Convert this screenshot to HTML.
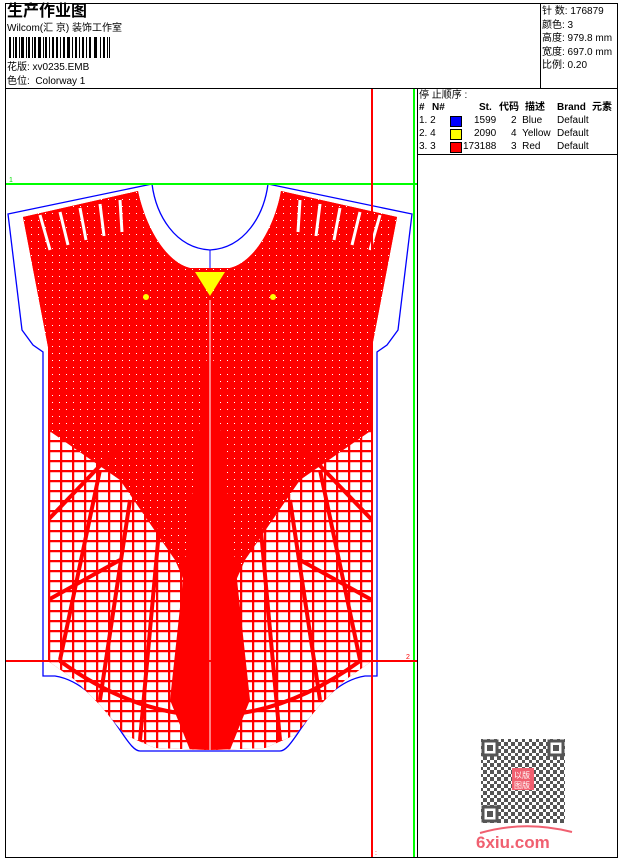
<!DOCTYPE html>
<html><head><meta charset="utf-8"><style>
html,body{margin:0;padding:0;background:#fff;}
body{width:620px;height:860px;position:relative;overflow:hidden;font-family:"Liberation Sans","Noto Sans CJK SC",sans-serif;color:#000;}
.a{position:absolute;white-space:nowrap;}
.t{font-size:10px;line-height:12px;}
</style></head><body>
<svg class="a" style="left:0;top:0" width="620" height="860" viewBox="0 0 620 860">
<defs>
<clipPath id="shirt"><path d="M23,217 L138,191 C145,225 165,262 190,268 L230,268 C255,262 275,225 281,191 L397,217 L372,347 L372,661 L345,680 L320,705 L295,735 L265,748 L210,750 L155,748 L125,735 L100,705 L75,680 L48,661 L48,347 Z"/></clipPath>
<pattern id="grid" width="12" height="10" patternUnits="userSpaceOnUse"><rect width="12" height="10" fill="#fff"/><path d="M0,1H12M1,0V10" stroke="#f00" stroke-width="2.5"/></pattern>
<pattern id="dots" width="7" height="7" patternUnits="userSpaceOnUse"><rect width="7" height="7" fill="#f00"/><rect x="3" y="3" width="1" height="1" fill="#fff"/></pattern>
<pattern id="qr" width="7" height="7" patternUnits="userSpaceOnUse"><rect width="7" height="7" fill="#fff"/><rect width="4" height="4" fill="#555"/><rect x="4" y="4" width="3" height="3" fill="#555"/></pattern>
</defs>
<text x="9" y="182" font-size="7" fill="#0d0" font-family="Liberation Sans">1</text>
<path d="M8,214 L152,184 C156,215 175,248 210,250 C245,248 264,215 268,184 L412,214 L398,330 L387,345 L377,352 L377,676 L365,676 C340,680 320,700 300,730 C290,745 285,751 280,751 L140,751 C135,751 130,745 120,730 C100,700 80,680 55,676 L43,676 L43,352 L33,345 L22,330 Z" fill="none" stroke="#00f" stroke-width="1.3"/>
<line x1="210" y1="250" x2="210" y2="270" stroke="#00f"/>
<g clip-path="url(#shirt)">
<rect x="0" y="180" width="420" height="580" fill="url(#dots)"/>
<rect x="0" y="430" width="420" height="330" fill="url(#grid)"/>
<path d="M0,180 L0,440 L48,430 L120,480 L175,560 L210,640 L245,560 L300,480 L372,430 L420,440 L420,180 Z" fill="url(#dots)"/>
<path d="M210,330 L170,700 L190,750 L230,750 L250,700 Z" fill="#f00"/>
<path d="M100,470 L60,660 M130,500 L100,700 M160,520 L140,740 M320,470 L360,660 M290,500 L320,700 M260,520 L280,740 M115,450 L48,520 M305,450 L372,520 M48,600 L120,560 M372,600 L300,560 M60,661 Q210,770 360,661" stroke="#f00" stroke-width="4" fill="none"/>
<path d="M40,215 L50,250 M60,212 L68,245 M80,208 L86,240 M100,204 L104,236 M120,200 L122,232 M300,200 L298,232 M320,204 L316,236 M340,208 L334,240 M360,212 L352,245 M380,215 L370,250" stroke="#fff" stroke-width="3"/>
<path d="M195,272 L225,272 L210,296 Z" fill="#ff0"/>
<circle cx="146" cy="297" r="3" fill="#ff0"/><circle cx="273" cy="297" r="3" fill="#ff0"/>
<line x1="210" y1="300" x2="210" y2="750" stroke="#fff" stroke-width="1"/>
</g>
<g shape-rendering="crispEdges">
<rect x="5" y="3" width="613" height="1" fill="#000"/>
<rect x="5" y="857" width="613" height="1" fill="#000"/>
<rect x="5" y="3" width="1" height="855" fill="#000"/>
<rect x="617" y="3" width="1" height="855" fill="#000"/>
<rect x="5" y="88" width="613" height="1" fill="#000"/>
<rect x="540" y="3" width="1" height="86" fill="#000"/>
<rect x="417" y="88" width="1" height="770" fill="#000"/>
<rect x="417" y="154" width="201" height="1" fill="#000"/>
<rect x="6" y="183" width="411" height="2" fill="#0f0"/>
<rect x="413" y="89" width="2" height="768" fill="#0f0"/>
<rect x="371" y="89" width="2" height="768" fill="#f00"/>
<rect x="6" y="660" width="411" height="2" fill="#f00"/>
</g>
<text x="406" y="659" font-size="7" fill="#f00" font-family="Liberation Sans">2</text>
<g fill="#000">
<rect x="9" y="37" width="2" height="21"/><rect x="13" y="37" width="1" height="21"/><rect x="15" y="37" width="2" height="21"/><rect x="19" y="37" width="1" height="21"/><rect x="21" y="37" width="3" height="21"/><rect x="26" y="37" width="1" height="21"/><rect x="28" y="37" width="2" height="21"/><rect x="32" y="37" width="1" height="21"/><rect x="34" y="37" width="2" height="21"/><rect x="38" y="37" width="3" height="21"/><rect x="43" y="37" width="1" height="21"/><rect x="45" y="37" width="2" height="21"/><rect x="49" y="37" width="1" height="21"/><rect x="52" y="37" width="2" height="21"/><rect x="56" y="37" width="2" height="21"/><rect x="60" y="37" width="1" height="21"/><rect x="63" y="37" width="2" height="21"/><rect x="67" y="37" width="3" height="21"/><rect x="72" y="37" width="1" height="21"/><rect x="75" y="37" width="2" height="21"/><rect x="79" y="37" width="1" height="21"/><rect x="82" y="37" width="2" height="21"/><rect x="86" y="37" width="1" height="21"/><rect x="89" y="37" width="2" height="21"/><rect x="94" y="37" width="3" height="21"/><rect x="100" y="37" width="1" height="21"/><rect x="103" y="37" width="2" height="21"/><rect x="107" y="37" width="1" height="21"/><rect x="109" y="37" width="1" height="21"/>
</g>
<rect x="481" y="739" width="84" height="84" fill="url(#qr)"/>
<g fill="none" stroke="#555" stroke-width="3">
<rect x="483" y="741" width="14" height="14" fill="#fff"/><rect x="549" y="741" width="14" height="14" fill="#fff"/><rect x="483" y="807" width="14" height="14" fill="#fff"/>
</g>
<rect x="487" y="745" width="6" height="6" fill="#555"/><rect x="553" y="745" width="6" height="6" fill="#555"/><rect x="487" y="811" width="6" height="6" fill="#555"/>
<rect x="512" y="768" width="22" height="22" fill="#f06070"/>
<text x="514" y="778" font-size="8" fill="#fff" font-family="Noto Sans CJK SC">以版</text>
<text x="514" y="788" font-size="8" fill="#fff" font-family="Noto Sans CJK SC">图版</text>
<path d="M480,833 Q525,820 572,832" stroke="#f06070" stroke-width="2" fill="none"/>
<text x="476" y="848" font-size="17" font-weight="bold" fill="#f06070" font-family="Liberation Sans">6xiu.com</text>
<text x="375" y="855" font-size="7" fill="#f00">:</text>
</svg>

<div class="a" style="left:7px;top:3px;font-size:16px;font-weight:bold;line-height:18px;">生产作业图</div>
<div class="a t" style="left:7px;top:23px;">Wilcom(汇 京) 装饰工作室</div>
<div class="a t" style="left:7px;top:62px;">花版: xv0235.EMB</div>
<div class="a t" style="left:7px;top:76px;">色位: &nbsp;Colorway 1</div>

<div class="a t" style="left:542px;top:5px;line-height:13.5px;">针 数: 176879<br>颜色: 3<br>高度: 979.8 mm<br>宽度: 697.0 mm<br>比例: 0.20</div>

<div class="a t" style="left:419px;top:90px;">停 止顺序 :</div>
<div class="a t" style="left:419px;top:102px;width:198px;">
<div style="position:relative;height:13px;font-weight:bold;text-decoration:underline;">
<span class="a" style="left:0">#</span><span class="a" style="left:13px">N#</span><span class="a" style="left:60px">St.</span><span class="a" style="left:80px">代码</span><span class="a" style="left:106px">描述</span><span class="a" style="left:138px">Brand</span><span class="a" style="left:173px">元素</span></div>
<div style="position:relative;height:13px;"><span class="a" style="left:0">1. 2</span><span class="a" style="left:31px;top:1px;width:10px;height:9px;background:#00f;border:1px solid #000"></span><span class="a" style="left:55px">1599</span><span class="a" style="left:92px">2 &nbsp;Blue</span><span class="a" style="left:138px">Default</span></div>
<div style="position:relative;height:13px;"><span class="a" style="left:0">2. 4</span><span class="a" style="left:31px;top:1px;width:10px;height:9px;background:#ff0;border:1px solid #000"></span><span class="a" style="left:55px">2090</span><span class="a" style="left:92px">4 &nbsp;Yellow</span><span class="a" style="left:138px">Default</span></div>
<div style="position:relative;height:13px;"><span class="a" style="left:0">3. 3</span><span class="a" style="left:31px;top:1px;width:10px;height:9px;background:#f00;border:1px solid #000"></span><span class="a" style="left:44px">173188</span><span class="a" style="left:92px">3 &nbsp;Red</span><span class="a" style="left:138px">Default</span></div>
</div>
</body></html>
